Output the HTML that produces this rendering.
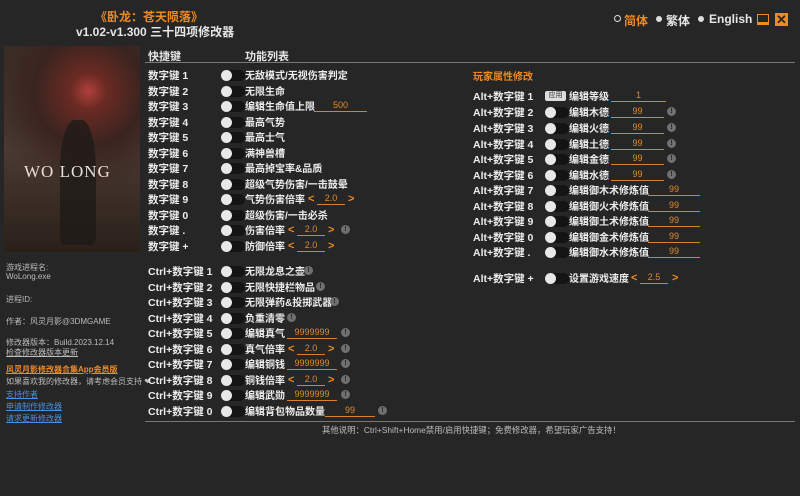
<!DOCTYPE html>
<html><head><meta charset="utf-8"><style>
*{margin:0;padding:0;box-sizing:border-box}
body{width:800px;height:496px;background:#262626;overflow:hidden;position:relative;font-family:"Liberation Sans","Noto Sans CJK SC",sans-serif;color:#e6e6e6}
.a{position:absolute;white-space:nowrap}
.k{font-size:10.5px;font-weight:bold;color:#ececec}
.l{font-size:10px;font-weight:bold;color:#ececec;margin-top:-1px}
.t{position:absolute;width:24px;height:11px;border-radius:6px;background:#141414}
.t::before{content:"";position:absolute;left:0;top:0;width:11px;height:11px;border-radius:50%;background:#e8e8e8}
.v{position:absolute;border-bottom:1px solid #d9822b;color:#e08a30;font-size:9px;text-align:center;height:12px;line-height:11px}
.i{position:absolute;width:9px;height:9px;border-radius:50%;background:#707070;color:#262626;font-size:7px;line-height:9px;text-align:center;font-weight:bold}
.ar{color:#f08a24;font-size:11px;font-weight:bold;margin-top:2px}
.s{font-size:8px;color:#bcbcbc}
.u{font-size:8px;color:#4a8fe0;text-decoration:underline}
</style></head><body>
<div class="a" style="left:95px;top:8px;font-size:12px;font-weight:bold;color:#f08a24">《卧龙：苍天陨落》</div>
<div class="a" style="left:76px;top:23px;font-size:12px;font-weight:bold;color:#e6e6e6">v1.02-v1.300 三十四项修改器</div>

<div class="a" style="left:614px;top:15px;width:7px;height:7px;border:1px solid #ddd;border-radius:50%"></div>
<div class="a" style="left:624px;top:12px;font-size:12px;font-weight:bold;color:#f08a24">简体</div>
<div class="a" style="left:656px;top:16px;width:6px;height:6px;background:#ddd;border-radius:50%"></div>
<div class="a" style="left:666px;top:12px;font-size:12px;font-weight:bold;color:#e6e6e6">繁体</div>
<div class="a" style="left:698px;top:16px;width:6px;height:6px;background:#ddd;border-radius:50%"></div>
<div class="a" style="left:709px;top:12px;font-size:12px;font-weight:bold;color:#e6e6e6">English</div>
<div class="a" style="left:757px;top:14px;width:12px;height:11px;border-bottom:3px solid #f08a24;border-left:1px solid #f08a24;border-right:1px solid #f08a24;border-top:1px solid #f08a24"></div>
<div class="a" style="left:775px;top:13px;width:13px;height:13px;background:#f08a24;color:#262626;font-size:13px;line-height:13px;text-align:center;font-weight:bold">✕</div>

<div class="a" style="left:4px;top:46px;width:136px;height:206px;background:radial-gradient(circle at 62% 22%,#b0403a 0,#6a2a22 10%,#3a2420 30%,transparent 55%),linear-gradient(#3a2e28,#4a3a32 50%,#2a201a)"></div>
<div class="a" style="left:60px;top:120px;width:36px;height:125px;background:#1e1a18;border-radius:40% 40% 10% 10%;opacity:.8"></div>
<div class="a" style="left:24px;top:162px;font-size:17px;color:#e8e0d8;font-family:'Liberation Serif',serif;letter-spacing:1px">WO LONG</div>

<div class="a s" style="left:6px;top:262px">游戏进程名:</div>
<div class="a s" style="left:6px;top:272px">WoLong.exe</div>
<div class="a s" style="left:6px;top:294px">进程ID:</div>
<div class="a s" style="left:6px;top:316px">作者：风灵月影@3DMGAME</div>
<div class="a s" style="left:6px;top:337px">修改器版本：Build.2023.12.14</div>
<div class="a s" style="left:6px;top:347px;text-decoration:underline">检查修改器版本更新</div>
<div class="a" style="left:6px;top:364px;font-size:8px;color:#f08a24;font-weight:bold;text-decoration:underline">风灵月影修改器合集App会员版</div>
<div class="a s" style="left:6px;top:376px">如果喜欢我的修改器，请考虑会员支持 ❤</div>
<div class="a u" style="left:6px;top:389px">支持作者</div>
<div class="a u" style="left:6px;top:401px">申请制作修改器</div>
<div class="a u" style="left:6px;top:413px">请求更新修改器</div>

<div class="a" style="left:148px;top:48px;font-size:11px;font-weight:bold">快捷键</div>
<div class="a" style="left:245px;top:48px;font-size:11px;font-weight:bold">功能列表</div>
<div class="a" style="left:145px;top:62px;width:650px;height:1px;background:#777"></div>
<div class="a" style="left:473px;top:68px;font-size:10px;font-weight:bold;color:#f08a24">玩家属性修改</div>

<div class="a k" style="left:148px;top:68px">数字键 1</div><div class="t" style="left:221px;top:70px"></div><div class="a l" style="left:245px;top:68px">无敌模式/无视伤害判定</div>
<div class="a k" style="left:148px;top:84px">数字键 2</div><div class="t" style="left:221px;top:86px"></div><div class="a l" style="left:245px;top:84px">无限生命</div>
<div class="a k" style="left:148px;top:99px">数字键 3</div><div class="t" style="left:221px;top:101px"></div><div class="a l" style="left:245px;top:99px">编辑生命值上限</div><div class="v" style="left:314px;top:100px;width:53px">500</div>
<div class="a k" style="left:148px;top:115px">数字键 4</div><div class="t" style="left:221px;top:117px"></div><div class="a l" style="left:245px;top:115px">最高气势</div>
<div class="a k" style="left:148px;top:130px">数字键 5</div><div class="t" style="left:221px;top:132px"></div><div class="a l" style="left:245px;top:130px">最高士气</div>
<div class="a k" style="left:148px;top:146px">数字键 6</div><div class="t" style="left:221px;top:148px"></div><div class="a l" style="left:245px;top:146px">满神兽槽</div>
<div class="a k" style="left:148px;top:161px">数字键 7</div><div class="t" style="left:221px;top:163px"></div><div class="a l" style="left:245px;top:161px">最高掉宝率&amp;品质</div>
<div class="a k" style="left:148px;top:177px">数字键 8</div><div class="t" style="left:221px;top:179px"></div><div class="a l" style="left:245px;top:177px">超级气势伤害/一击鼓晕</div>
<div class="a k" style="left:148px;top:192px">数字键 9</div><div class="t" style="left:221px;top:194px"></div><div class="a l" style="left:245px;top:192px">气势伤害倍率</div><div class="a ar" style="left:308px;top:191px">&lt;</div><div class="v" style="left:317px;top:193px;width:28px">2.0</div><div class="a ar" style="left:348px;top:191px">&gt;</div>
<div class="a k" style="left:148px;top:208px">数字键 0</div><div class="t" style="left:221px;top:210px"></div><div class="a l" style="left:245px;top:208px">超级伤害/一击必杀</div>
<div class="a k" style="left:148px;top:223px">数字键 .</div><div class="t" style="left:221px;top:225px"></div><div class="a l" style="left:245px;top:223px">伤害倍率</div><div class="a ar" style="left:288px;top:222px">&lt;</div><div class="v" style="left:297px;top:224px;width:28px">2.0</div><div class="a ar" style="left:328px;top:222px">&gt;</div><div class="i" style="left:341px;top:225px">!</div>
<div class="a k" style="left:148px;top:239px">数字键 +</div><div class="t" style="left:221px;top:241px"></div><div class="a l" style="left:245px;top:239px">防御倍率</div><div class="a ar" style="left:288px;top:238px">&lt;</div><div class="v" style="left:297px;top:240px;width:28px">2.0</div><div class="a ar" style="left:328px;top:238px">&gt;</div>

<div class="a k" style="left:148px;top:264px">Ctrl+数字键 1</div><div class="t" style="left:221px;top:266px"></div><div class="a l" style="left:245px;top:264px">无限龙息之壶</div><div class="i" style="left:304px;top:266px">!</div>
<div class="a k" style="left:148px;top:280px">Ctrl+数字键 2</div><div class="t" style="left:221px;top:282px"></div><div class="a l" style="left:245px;top:280px">无限快捷栏物品</div><div class="i" style="left:316px;top:282px">!</div>
<div class="a k" style="left:148px;top:295px">Ctrl+数字键 3</div><div class="t" style="left:221px;top:297px"></div><div class="a l" style="left:245px;top:295px">无限弹药&amp;投掷武器</div><div class="i" style="left:330px;top:297px">!</div>
<div class="a k" style="left:148px;top:311px">Ctrl+数字键 4</div><div class="t" style="left:221px;top:313px"></div><div class="a l" style="left:245px;top:311px">负重清零</div><div class="i" style="left:287px;top:313px">!</div>
<div class="a k" style="left:148px;top:326px">Ctrl+数字键 5</div><div class="t" style="left:221px;top:328px"></div><div class="a l" style="left:245px;top:326px">编辑真气</div><div class="v" style="left:287px;top:327px;width:50px">9999999</div><div class="i" style="left:341px;top:328px">!</div>
<div class="a k" style="left:148px;top:342px">Ctrl+数字键 6</div><div class="t" style="left:221px;top:344px"></div><div class="a l" style="left:245px;top:342px">真气倍率</div><div class="a ar" style="left:288px;top:341px">&lt;</div><div class="v" style="left:297px;top:343px;width:28px">2.0</div><div class="a ar" style="left:328px;top:341px">&gt;</div><div class="i" style="left:341px;top:344px">!</div>
<div class="a k" style="left:148px;top:357px">Ctrl+数字键 7</div><div class="t" style="left:221px;top:359px"></div><div class="a l" style="left:245px;top:357px">编辑铜钱</div><div class="v" style="left:287px;top:358px;width:50px">9999999</div><div class="i" style="left:341px;top:359px">!</div>
<div class="a k" style="left:148px;top:373px">Ctrl+数字键 8</div><div class="t" style="left:221px;top:375px"></div><div class="a l" style="left:245px;top:373px">铜钱倍率</div><div class="a ar" style="left:288px;top:372px">&lt;</div><div class="v" style="left:297px;top:374px;width:28px">2.0</div><div class="a ar" style="left:328px;top:372px">&gt;</div><div class="i" style="left:341px;top:375px">!</div>
<div class="a k" style="left:148px;top:388px">Ctrl+数字键 9</div><div class="t" style="left:221px;top:390px"></div><div class="a l" style="left:245px;top:388px">编辑武勋</div><div class="v" style="left:287px;top:389px;width:50px">9999999</div><div class="i" style="left:341px;top:390px">!</div>
<div class="a k" style="left:148px;top:404px">Ctrl+数字键 0</div><div class="t" style="left:221px;top:406px"></div><div class="a l" style="left:245px;top:404px">编辑背包物品数量</div><div class="v" style="left:325px;top:405px;width:50px">99</div><div class="i" style="left:378px;top:406px">!</div>

<div class="a" style="left:145px;top:421px;width:650px;height:1px;background:#777"></div>
<div class="a" style="left:322px;top:424px;font-size:8.4px;color:#bcbcbc">其他说明：Ctrl+Shift+Home禁用/启用快捷键；免费修改器，希望玩家广告支持！</div>

<div class="a k" style="left:473px;top:89px">Alt+数字键 1</div><div class="a" style="left:545px;top:91px;width:21px;height:10px;background:#ddd;border-radius:2px;color:#333;font-size:7px;line-height:10px;text-align:center">应用</div><div class="a l" style="left:569px;top:89px">编辑等级</div><div class="v" style="left:611px;top:90px;width:55px">1</div>
<div class="a k" style="left:473px;top:105px">Alt+数字键 2</div><div class="t" style="left:545px;top:107px"></div><div class="a l" style="left:569px;top:105px">编辑木德</div><div class="v" style="left:611px;top:106px;width:53px">99</div><div class="i" style="left:667px;top:107px">!</div>
<div class="a k" style="left:473px;top:121px">Alt+数字键 3</div><div class="t" style="left:545px;top:123px"></div><div class="a l" style="left:569px;top:121px">编辑火德</div><div class="v" style="left:611px;top:122px;width:53px">99</div><div class="i" style="left:667px;top:123px">!</div>
<div class="a k" style="left:473px;top:137px">Alt+数字键 4</div><div class="t" style="left:545px;top:139px"></div><div class="a l" style="left:569px;top:137px">编辑土德</div><div class="v" style="left:611px;top:138px;width:53px">99</div><div class="i" style="left:667px;top:139px">!</div>
<div class="a k" style="left:473px;top:152px">Alt+数字键 5</div><div class="t" style="left:545px;top:154px"></div><div class="a l" style="left:569px;top:152px">编辑金德</div><div class="v" style="left:611px;top:153px;width:53px">99</div><div class="i" style="left:667px;top:154px">!</div>
<div class="a k" style="left:473px;top:168px">Alt+数字键 6</div><div class="t" style="left:545px;top:170px"></div><div class="a l" style="left:569px;top:168px">编辑水德</div><div class="v" style="left:611px;top:169px;width:53px">99</div><div class="i" style="left:667px;top:170px">!</div>
<div class="a k" style="left:473px;top:183px">Alt+数字键 7</div><div class="t" style="left:545px;top:185px"></div><div class="a l" style="left:569px;top:183px">编辑御木术修炼值</div><div class="v" style="left:648px;top:184px;width:52px">99</div>
<div class="a k" style="left:473px;top:199px">Alt+数字键 8</div><div class="t" style="left:545px;top:201px"></div><div class="a l" style="left:569px;top:199px">编辑御火术修炼值</div><div class="v" style="left:648px;top:200px;width:52px">99</div>
<div class="a k" style="left:473px;top:214px">Alt+数字键 9</div><div class="t" style="left:545px;top:216px"></div><div class="a l" style="left:569px;top:214px">编辑御土术修炼值</div><div class="v" style="left:648px;top:215px;width:52px">99</div>
<div class="a k" style="left:473px;top:230px">Alt+数字键 0</div><div class="t" style="left:545px;top:232px"></div><div class="a l" style="left:569px;top:230px">编辑御金术修炼值</div><div class="v" style="left:648px;top:231px;width:52px">99</div>
<div class="a k" style="left:473px;top:245px">Alt+数字键 .</div><div class="t" style="left:545px;top:247px"></div><div class="a l" style="left:569px;top:245px">编辑御水术修炼值</div><div class="v" style="left:648px;top:246px;width:52px">99</div>
<div class="a k" style="left:473px;top:271px">Alt+数字键 +</div><div class="t" style="left:545px;top:273px"></div><div class="a l" style="left:569px;top:271px">设置游戏速度</div><div class="a ar" style="left:631px;top:270px">&lt;</div><div class="v" style="left:640px;top:272px;width:28px">2.5</div><div class="a ar" style="left:672px;top:270px">&gt;</div>
</body></html>
